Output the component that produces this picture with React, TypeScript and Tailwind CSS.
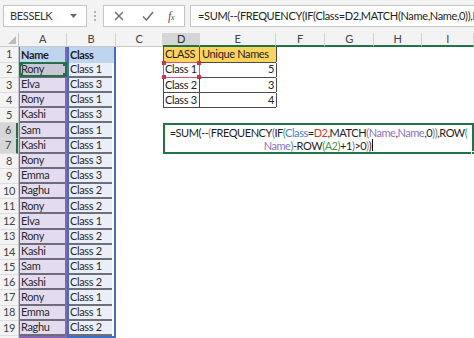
const names = ["Rony", "Elva", "Rony", "Kashi", "Sam", "Kashi", "Rony", "Emma", "Raghu", "Rony", "Elva", "Rony", "Kashi", "Sam", "Kashi", "Rony", "Emma", "Raghu"];
const classes = ["Class 1", "Class 3", "Class 1", "Class 3", "Class 1", "Class 1", "Class 3", "Class 3", "Class 2", "Class 2", "Class 1", "Class 2", "Class 2", "Class 1", "Class 2", "Class 1", "Class 1", "Class 2"];

const summary = [
  ["Class 1", 5],
  ["Class 2", 3],
  ["Class 3", 4],
] as const;

const cols = [
  { id: "A", w: "w-[48px]" },
  { id: "B", w: "w-[49px]" },
  { id: "C", w: "w-[47px]" },
  { id: "D", w: "w-[37px]" },
  { id: "E", w: "w-[76px]" },
  { id: "F", w: "w-[49px]" },
  { id: "G", w: "w-[49px]" },
  { id: "H", w: "w-[48px]" },
  { id: "I", w: "w-[52px]" },
];

const K = "text-[#1e1e1e]";
const OR = "text-[#d9762f]";
const PU = "text-[#8d5fae]";
const PK = "text-[#b1619f]";
const GR = "text-[#3f9a52]";
const BL = "text-[#4a7dcc]";
const RD = "text-[#cf3a3a]";
const NM = "text-[#8b72c2]";

const line1: [string, string][] = [
  ["=SUM(--", K], ["(", OR], ["FREQUENCY", K], ["(", PU], ["IF", K], ["(", GR],
  ["Class", BL], ["=", K], ["D2", RD], [",MATCH", K], ["(", PK], ["Name", NM],
  [",", K], ["Name", NM], [",0", K], [")", PK], [")", GR], [",ROW", K], ["(", GR],
];
const line2: [string, string][] = [
  ["Name", NM], [")", GR], ["-ROW", K], ["(", GR], ["A2", GR], [")", GR],
  ["+1", K], [")", PU], [">0", K], [")", OR], [")", K],
];

function Handles({ color }: { color: string }) {
  return (
    <>
      <span className={`absolute -left-[2px] -top-[2px] w-[4px] h-[4px] ${color}`} />
      <span className={`absolute -right-[2px] -top-[2px] w-[4px] h-[4px] ${color}`} />
      <span className={`absolute -left-[2px] -bottom-[2px] w-[4px] h-[4px] ${color}`} />
      <span className={`absolute -right-[2px] -bottom-[2px] w-[4px] h-[4px] ${color}`} />
    </>
  );
}

function Toolbar() {
  return (
    <div className="h-[33px] bg-[#f3f3f3] flex items-start pt-[5px]">
      <div className="ml-[3px] w-[84px] h-[22px] bg-white border border-[#c6c6c6] flex items-center justify-between pl-[6px] pr-[9px]">
        <span className="text-[11px] text-[#333]">BESSELK</span>
        <svg width="7" height="4" viewBox="0 0 7 4">
          <path d="M0 0h7L3.5 4z" fill="#6a6a6a" />
        </svg>
      </div>
      <div className="w-[16px] h-[22px] flex flex-col items-center justify-center gap-[2px]">
        <span className="w-[2px] h-[2px] bg-[#b0b0b0]" />
        <span className="w-[2px] h-[2px] bg-[#b0b0b0]" />
        <span className="w-[2px] h-[2px] bg-[#b0b0b0]" />
      </div>
      <div className="w-[82px] h-[22px] bg-white border border-[#c6c6c6] flex items-center pl-[10px]">
        <svg width="10" height="10" viewBox="0 0 10 10">
          <path d="M1 1l8 8M9 1l-8 8" stroke="#6a6a6a" strokeWidth="1.3" />
        </svg>
        <svg className="ml-[18px]" width="12" height="10" viewBox="0 0 12 10">
          <path d="M1 5.5l3.5 3.5L11 1" stroke="#6a6a6a" strokeWidth="1.4" fill="none" />
        </svg>
        <span className="ml-[14px] text-[12px] italic text-[#555] font-['Liberation_Serif',serif] leading-none">
          f<span className="text-[8px]">x</span>
        </span>
      </div>
      <div className="ml-[5px] flex-1 min-w-0 h-[22px] bg-white border border-[#c6c6c6] border-r-0 flex items-center pl-[7px] overflow-hidden">
        <span className="text-[11px] text-[#222] whitespace-nowrap">
          =SUM(--(FREQUENCY(IF(Class=D2,MATCH(Name,Name,0)),ROW(Name)-ROW(A2)+1)&gt;0))
        </span>
      </div>
    </div>
  );
}

function HeaderRow() {
  return (
    <div className="flex h-[14.4px] bg-[#f3f3f3]">
      <div className="w-[19px] border-r border-b border-[#c8c8c8] flex items-end justify-end p-[2px]">
        <svg width="8" height="8" viewBox="0 0 8 8">
          <path d="M8 0v8H0z" fill="#bcbcbc" />
        </svg>
      </div>
      {cols.map((c) => {
        const sel = c.id === "D";
        const green = ["D", "E", "F", "G", "H", "I"].includes(c.id);
        return (
          <div
            key={c.id}
            className={`${c.w} shrink-0 flex items-center justify-center text-[11px] border-r border-[#d4d4d4] ${
              sel ? "bg-[#d6d6d6] text-[#2c2c2c]" : "text-[#444]"
            } ${green ? "border-b-2 border-b-[#217346]" : "border-b border-b-[#c8c8c8]"}`}
          >
            {c.id}
          </div>
        );
      })}
    </div>
  );
}

function RowHeaders() {
  return (
    <div className="w-[19px] shrink-0 bg-[#f3f3f3] border-r border-[#c8c8c8]">
      {Array.from({ length: 19 }, (_, i) => i + 1).map((n) => {
        const sel = n === 6 || n === 7;
        return (
          <div
            key={n}
            className={`h-[15.2px] flex items-center justify-center text-[11px] text-[#444] border-b border-[#dedede] ${
              sel ? "bg-[#d6d6d6] border-r-2 border-r-[#217346]" : ""
            }`}
          >
            {n}
          </div>
        );
      })}
    </div>
  );
}

function NameColumn() {
  return (
    <div className="w-[48px] shrink-0 border-l border-r-2 border-[#8467b3] border-b-2">
      <div className="h-[15.2px] bg-[#bfd5ee] pl-[1px] flex items-center text-[11px] font-bold text-[#1e1e1e]">
        Name
      </div>
      {names.map((n, i) => (
        <div
          key={i}
          className={`relative h-[15.2px] pl-[1px] flex items-center text-[11px] text-[#2a2a2a] border-b-2 border-[#6e6c7c] ${
            i === 0 ? "bg-[#c9c7d3]" : "bg-[#e3dcf0]"
          }`}
        >
          {n}
          {i === 0 && (
            <div className="absolute -left-[1px] -right-[2px] -top-[1px] -bottom-[1px] border-2 border-[#217346]">
              <Handles color="bg-[#217346]" />
            </div>
          )}
        </div>
      ))}
    </div>
  );
}

function ClassColumn() {
  return (
    <div className="w-[49px] shrink-0 border-l-2 border-r-2 border-b-2 border-[#3f6fc4]">
      <div className="h-[15.2px] bg-[#bfd5ee] pl-[1px] flex items-center text-[11px] font-bold text-[#1e1e1e]">
        Class
      </div>
      {classes.map((c, i) => (
        <div key={i} className="h-[15.2px] bg-[#e9eef8] pl-[1px] flex items-center text-[11px] text-[#2a2a2a] border-b-2 border-[#6e7078] mr-[2px] whitespace-nowrap">
          {c}
        </div>
      ))}
    </div>
  );
}

function SummaryTable() {
  return (
    <div className="ml-[47px] w-[113px] border-l border-[#4a4a4a] whitespace-nowrap">
      <div className="flex h-[15.2px] bg-[#fcd35c] border-b border-[#4a4a4a]">
        <div className="w-[36px] shrink-0 border-r border-[#4a4a4a] pl-[1px] flex items-center text-[11px] text-[#1e1e1e] tracking-[-0.5px]">CLASS</div>
        <div className="w-[77px] shrink-0 border-r border-[#4a4a4a] pl-[2px] flex items-center text-[11px] text-[#1e1e1e]">Unique Names</div>
      </div>
      {summary.map(([label, n], i) => (
        <div key={label} className="flex h-[15.2px] border-b border-[#4a4a4a]">
          <div className="relative w-[36px] shrink-0 border-r border-[#4a4a4a] pl-[1px] flex items-center text-[11px] text-[#222]">
            {label}
            {i === 0 && (
              <div className="absolute -left-[1px] -right-[1px] -top-[1px] -bottom-[1px] border border-[#d4596a]">
                <Handles color="bg-[#c8354d]" />
              </div>
            )}
          </div>
          <div className="w-[77px] shrink-0 border-r border-[#4a4a4a] pr-[2px] flex items-center justify-end text-[11px] text-[#222]">
            {n}
          </div>
        </div>
      ))}
    </div>
  );
}

function FormulaCell() {
  return (
    <div className="relative ml-[47px] mt-[15.2px] w-[311px] h-[30.4px] border-2 border-[#217346] bg-white flex flex-col items-center justify-center text-[11px] leading-[13px] whitespace-nowrap tracking-[-0.45px]">
      <div>
        {line1.map(([t, c], i) => (
          <span key={i} className={c}>{t}</span>
        ))}
      </div>
      <div className="flex items-center">
        {line2.map(([t, c], i) => (
          <span key={i} className={c}>{t}</span>
        ))}
        <span className="ml-[1px] w-[1px] h-[12px] bg-[#111]" />
      </div>
      <span className="absolute -right-[3px] -bottom-[3px] w-[4px] h-[4px] bg-[#217346] border border-white" />
    </div>
  );
}

export default function App() {
  return (
    <div className="w-[474px] h-[338px] overflow-hidden bg-white font-['Lato','Liberation_Sans',sans-serif] tracking-[-0.35px]">
      <Toolbar />
      <HeaderRow />
      <div className="flex">
        <RowHeaders />
        <NameColumn />
        <ClassColumn />
        <div className="flex-1 flex flex-col">
          <SummaryTable />
          <FormulaCell />
        </div>
      </div>
    </div>
  );
}
